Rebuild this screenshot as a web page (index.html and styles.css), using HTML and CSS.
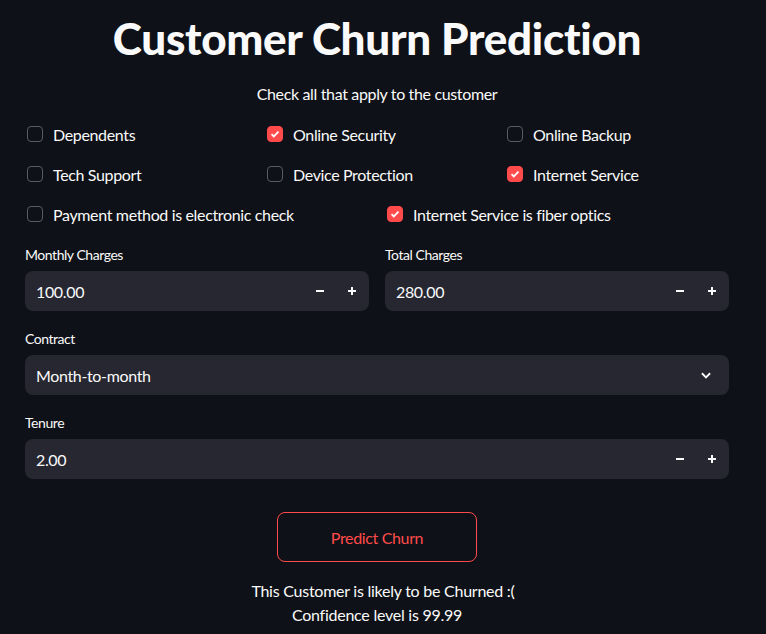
FILE: index.html
```html
<!DOCTYPE html>
<html>
<head>
<meta charset="utf-8">
<link rel="stylesheet" href="styles.css">
</head>
<body>
<div class="main">
  <h1 class="title">Customer Churn Prediction</h1>
  <p class="subtitle">Check all that apply to the customer</p>

  <div class="grid3">
    <label class="cb"><span class="box"></span><span>Dependents</span></label>
    <label class="cb"><span class="box on"><svg viewBox="0 0 16 16"><path d="M4 8.2l2.6 2.6L12 5.4" /></svg></span><span>Online Security</span></label>
    <label class="cb"><span class="box"></span><span>Online Backup</span></label>
    <label class="cb"><span class="box"></span><span>Tech Support</span></label>
    <label class="cb"><span class="box"></span><span>Device Protection</span></label>
    <label class="cb"><span class="box on"><svg viewBox="0 0 16 16"><path d="M4 8.2l2.6 2.6L12 5.4" /></svg></span><span>Internet Service</span></label>
  </div>
  <div class="grid2">
    <label class="cb"><span class="box"></span><span>Payment method is electronic check</span></label>
    <label class="cb"><span class="box on"><svg viewBox="0 0 16 16"><path d="M4 8.2l2.6 2.6L12 5.4" /></svg></span><span>Internet Service is fiber optics</span></label>
  </div>

  <div class="grid2 fields">
    <div class="field">
      <div class="lbl">Monthly Charges</div>
      <div class="input">
        <span class="val">100.00</span>
        <span class="steps">
          <svg viewBox="0 0 10 10"><path d="M1 5h8"/></svg>
          <svg viewBox="0 0 10 10"><path d="M1 5h8M5 1v8"/></svg>
        </span>
      </div>
    </div>
    <div class="field">
      <div class="lbl">Total Charges</div>
      <div class="input">
        <span class="val">280.00</span>
        <span class="steps">
          <svg viewBox="0 0 10 10"><path d="M1 5h8"/></svg>
          <svg viewBox="0 0 10 10"><path d="M1 5h8M5 1v8"/></svg>
        </span>
      </div>
    </div>
  </div>

  <div class="field wide">
    <div class="lbl">Contract</div>
    <div class="input select">
      <span class="val">Month-to-month</span>
      <svg class="chev" viewBox="0 0 12 12"><path d="M2.5 4.5L6 8l3.5-3.5"/></svg>
    </div>
  </div>

  <div class="field wide">
    <div class="lbl">Tenure</div>
    <div class="input">
      <span class="val">2.00</span>
      <span class="steps">
        <svg viewBox="0 0 10 10"><path d="M1 5h8"/></svg>
        <svg viewBox="0 0 10 10"><path d="M1 5h8M5 1v8"/></svg>
      </span>
    </div>
  </div>

  <div class="btnrow"><button class="btn">Predict Churn</button></div>

  <p class="result first">This Customer is likely to be Churned :(</p>
  <p class="result">Confidence level is 99.99</p>
</div>
</body>
</html>
```

FILE: styles.css
```css
* { box-sizing: border-box; }
html, body { margin: 0; padding: 0; background: #0e1117; }
body {
  color: #fafafa;
  font-family: "Lato", "Open Sans", sans-serif;
  font-size: 16px;
  letter-spacing: -0.35px;
  overflow: hidden;
}
.main {
  width: 704px;
  margin-left: 25px;
}
.title {
  margin: 0;
  padding-top: 12px;
  font-size: 44px;
  font-weight: 900;
  line-height: 52px;
  text-align: center;
  letter-spacing: -0.3px;
}
.subtitle {
  margin: 18px 0 0;
  text-align: center;
  line-height: 24px;
}
.grid3 {
  margin-top: 8px;
  display: grid;
  grid-template-columns: repeat(3, 1fr);
  column-gap: 16px;
}
.grid2 {
  display: grid;
  grid-template-columns: repeat(2, 1fr);
  column-gap: 16px;
}
.cb {
  display: flex;
  align-items: center;
  height: 40px;
  gap: 10px;
  padding-left: 2px;
}
.box {
  width: 16px;
  height: 16px;
  border: 1px solid #5a5c64;
  border-radius: 4px;
  flex: none;
  display: flex;
}
.box.on {
  background: #ff4b4b;
  border-color: #ff4b4b;
}
.box svg {
  width: 14px;
  height: 14px;
  fill: none;
  stroke: #fff;
  stroke-width: 2;
}
.fields { margin-top: 11px; }
.field { display: flex; flex-direction: column; }
.field.wide { margin-top: 18px; }
.lbl {
  font-size: 14px;
  letter-spacing: -0.45px;
  line-height: 20px;
  height: 26px;
}
.input {
  height: 40px;
  background: #262730;
  border-radius: 8px;
  display: flex;
  align-items: center;
  justify-content: space-between;
  padding: 0 12px 0 11px;
}
.steps { display: flex; gap: 22px; padding-right: 0; }
.steps svg {
  width: 10px;
  height: 10px;
  fill: none;
  stroke: #fafafa;
  stroke-width: 2;
}
.chev {
  width: 14px;
  height: 14px;
  fill: none;
  stroke: #fafafa;
  stroke-width: 1.6;
  margin-right: 4px;
}
.btnrow {
  display: flex;
  justify-content: center;
  margin-top: 33px;
}
.btn {
  width: 200px;
  height: 50px;
  background: #0e1117;
  border: 1px solid #ff4b4b;
  border-radius: 8px;
  color: #ff4b4b;
  font-family: inherit;
  font-size: 16px;
  letter-spacing: -0.35px;
}
.result {
  margin: 0;
  text-align: center;
  line-height: 24px;
  letter-spacing: -0.25px;
}
.result.first { margin-top: 17px; padding-left: 12px; }
```
